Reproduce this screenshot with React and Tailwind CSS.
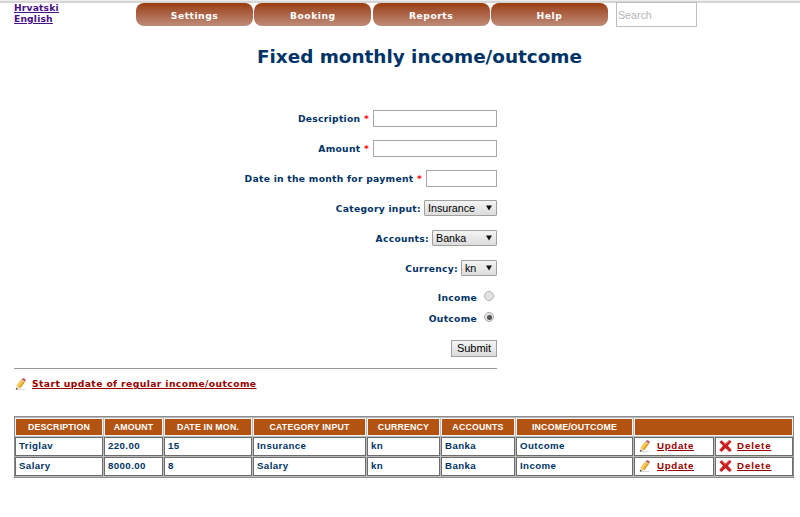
const verdana = "font-['DejaVu_Sans',sans-serif] font-bold";
const arial = "font-['Liberation_Sans',sans-serif]";

function Pencil({ className }) {
  return (
    <svg className={`shrink-0 ${className}`} width="12" height="12" viewBox="0 0 12 12">
      <path d="M2 11.5h8" stroke="#c9c9c9" strokeWidth=".7" />
      <path d="M1.7 7.6 6.4 1.2 10 3.8 5.2 10.2Z" fill="#eab230" />
      <path d="M3 8.2 7.6 2" stroke="#fbdc74" strokeWidth="1.2" />
      <path d="M5 10 9.8 3.7" stroke="#bd8428" strokeWidth=".6" />
      <path d="M6.6 1.4 7.8.2Q9.8 0 10.9 2L9.9 3.8Z" fill="#b8525a" />
      <path d="M6.4 1.6 9.9 4" stroke="#e2dcd8" strokeWidth=".8" />
      <path d="M1.7 7.6 5.2 10.2 1 11.7Z" fill="#e9cfa2" />
      <path d="M1.3 9.9 2.9 11 .7 11.8Z" fill="#222" />
    </svg>
  );
}

function Cross() {
  return (
    <svg className="shrink-0 -translate-y-px" width="13" height="12" viewBox="0 0 13 12">
      <path d="M2.8.2 6.4 3.6 10.2 0 12.6 1.4 8.9 5.8 12.8 10 10.6 12 6.4 8.2 2.6 12 .2 10 4 5.8.4 2Z" fill="#cb1f1f" />
      <path d="M2.8.9 6.4 4.5 10.3.9" fill="none" stroke="#e5645c" strokeWidth=".9" />
    </svg>
  );
}

function Row({ label, required, className, children }) {
  return (
    <div className={`flex items-center justify-end ${className}`}>
      <span className={`whitespace-pre ${required ? "" : "pt-[2px]"}`}>
        {label}
        {required && <span className="text-[#ff0000]"> *</span>}
      </span>
      {children}
    </div>
  );
}

function Field({ className }) {
  return <input className={`ml-[4px] h-[17px] border border-[#a6a6a6] bg-white ${className}`} />;
}

function Select({ value, className }) {
  return (
    <div className={`ml-[3px] flex h-[16px] items-center justify-between rounded-[1px] border border-[#a0a0a0] bg-linear-to-b from-[#f4f4f4] to-[#dcdcdc] pl-[3px] pr-[4px] text-[10.7px] font-normal tracking-normal text-black ${arial} ${className}`}>
      <span className="pt-px">{value}</span>
      <svg width="6" height="6" viewBox="0 0 6 6"><path d="M0 .5h6L3 5.5Z" fill="#111" /></svg>
    </div>
  );
}

function Radio({ checked }) {
  return (
    <span className="mr-[3px] ml-[7px] flex h-[10px] w-[10px] -translate-y-px items-center justify-center rounded-full border border-[#b0b0b0] bg-[#e2e2e2]">
      {checked && <span className="h-[5px] w-[5px] rounded-full bg-[#555]" />}
    </span>
  );
}

const heads = ["DESCRIPTION", "AMOUNT", "DATE IN MON.", "CATEGORY INPUT", "CURRENCY", "ACCOUNTS", "INCOME/OUTCOME"];
const rows = [
  ["Triglav", "220.00", "15", "Insurance", "kn", "Banka", "Outcome"],
  ["Salary", "8000.00", "8", "Salary", "kn", "Banka", "Income"],
];
const cell = "flex items-center border border-[#6c6c6c] bg-white pl-[3px]";
const head = "flex items-center justify-center border border-[#f3f3f3] bg-[#b25312]";

export default function App() {
  return (
    <div className={`h-[517px] w-[800px] overflow-hidden bg-white text-[9.2px] tracking-[.28px] text-[#003366] ${verdana}`}>
      <div className="h-[3px] border-b-2 border-[#d6d6d6] bg-[#ededed]" />
      <header className="flex h-[25px]">
        <nav className="-mt-px flex w-[136px] flex-col pl-[14px] leading-[11px] tracking-[.15px] text-[#4b1187] underline">
          <a className="w-fit">Hrvatski</a>
          <a className="w-fit">English</a>
        </nav>
        <nav className="flex gap-[1.3px] pr-[8px]">
          {["Settings", "Booking", "Reports", "Help"].map((t) => (
            <a key={t} className="flex h-[23px] w-[117px] items-center justify-center rounded-[8px] bg-linear-to-b from-[#993c09] to-[#bd8c7a] pt-[2px] tracking-[.5px] text-white">{t}</a>
          ))}
        </nav>
        <input placeholder="Search" className={`-mt-px h-[25px] w-[81px] border border-[#bdbdbd] pl-px text-[10.7px] font-normal tracking-normal placeholder:text-[#b5b5b5] ${arial}`} />
      </header>
      <h1 className="mt-[16px] pl-[257px] text-[18.4px] leading-[26px] tracking-[-.01px]">Fixed monthly income/outcome</h1>

      <form className="mt-[40px] ml-[14px] flex w-[483px] flex-col border-b border-[#999]">
        <Row label="Description" required className="h-[17px]"><Field className="w-[124px]" /></Row>
        <Row label="Amount" required className="mt-[13px] h-[17px]"><Field className="w-[124px]" /></Row>
        <Row label="Date in the month for payment" required className="mt-[13px] h-[17px]"><Field className="w-[71px]" /></Row>
        <Row label="Category input:" className="mt-[13px] h-[16px]"><Select value="Insurance" className="w-[73px]" /></Row>
        <Row label="Accounts:" className="mt-[14px] h-[16px]"><Select value="Banka" className="w-[65px]" /></Row>
        <Row label="Currency:" className="mt-[14px] h-[16px]"><Select value="kn" className="w-[36px]" /></Row>
        <Row label="Income" className="mt-[14px] h-[14px]"><Radio /></Row>
        <Row label="Outcome" className="mt-[7px] h-[14px]"><Radio checked /></Row>
        <button type="button" className={`mt-[15px] mb-[11px] h-[17px] w-[46px] self-end border border-[#a0a0a0] bg-linear-to-b from-[#f4f4f4] to-[#dcdcdc] text-[11px] leading-[15px] font-normal tracking-normal text-black ${arial}`}>Submit</button>
      </form>

      <div className="mt-[7px] ml-[14px] flex h-[16px] items-center text-[#990000]">
        <Pencil className="mr-[5px] ml-px" />
        <a className="tracking-[.41px] underline">Start update of regular income/outcome</a>
      </div>

      <div className={`mt-[24px] ml-[14px] grid h-[62px] w-[780px] grid-cols-[88px_59px_88px_113px_73px_74px_117px_80px_78px] grid-rows-[18px_19px_19px] gap-px border border-[#8c8c8c] bg-[#bcbcbc] pt-px text-[9.7px] tracking-[.4px] ${arial}`}>
        {heads.map((h) => <div key={h} className={`${head} pt-px text-[8.8px] tracking-[.18px] text-white`}>{h}</div>)}
        <div className={`${head} col-span-2`} />
        {rows.map((r) => [
          ...r.map((c, i) => <div key={r[0] + i} className={cell}>{c}</div>),
          <div key={r[0] + "u"} className={`${cell} text-[#990000]`}><Pencil className="mr-[6px] ml-px -translate-y-px" /><a className="tracking-[.7px] underline">Update</a></div>,
          <div key={r[0] + "d"} className={`${cell} text-[#990000]`}><Cross /><a className="ml-[5px] tracking-[.9px] underline">Delete</a></div>,
        ])}
      </div>
    </div>
  );
}
